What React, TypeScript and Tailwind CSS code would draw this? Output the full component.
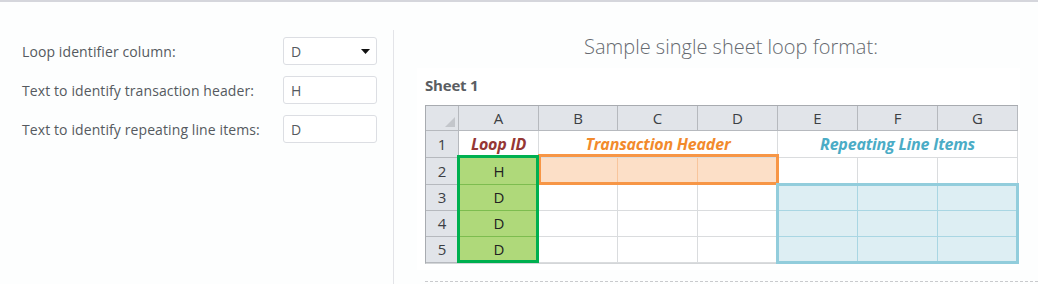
import React from 'react';

const ui = { fontFamily: '"Open Sans", "Noto Sans", sans-serif' };
const xl = { fontFamily: '"Open Sans", Lato, sans-serif' };

const cols = ['A', 'B', 'C', 'D', 'E', 'F', 'G'];

const FormRow = ({ label, value, select }: { label: string; value: string; select?: boolean }) => (
  <div className="flex items-center h-[28px]">
    <div className="w-[261px] text-[14px] tracking-[0.1px] text-[#555a60] whitespace-nowrap">{label}</div>
    <div className="w-[94px] h-[28px] flex items-center justify-between rounded-[3px] border border-[#dcdee3] bg-white pl-[7px] pr-[6px] text-[14px] text-[#555a60]">
      <span>{value}</span>
      {select && (
        <svg width="9" height="5" viewBox="0 0 9 5">
          <path d="M0 0h9L4.5 5z" fill="#111" />
        </svg>
      )}
    </div>
  </div>
);

// data rows 2..5 -> column A content
const rows = [
  { n: 2, a: 'H' },
  { n: 3, a: 'D' },
  { n: 4, a: 'D' },
  { n: 5, a: 'D' },
];

const Sheet = () => (
  <div className="relative w-[593px]" style={xl}>
    <div className="grid grid-cols-[33px_80px_79px_80px_80px_80px_80px_80px] grid-rows-[25px_27px_27px_26px_26px_26px] border-t border-l border-[#a8abb0] border-b border-b-[#d4d6d8]">
      {/* header row */}
      <div className="relative bg-[#e1e4e9] border-r border-b border-[#b6b9be]">
        <svg className="absolute right-[3px] bottom-[3px]" width="10" height="10" viewBox="0 0 10 10">
          <path d="M10 0v10H0z" fill="#c3c6cb" />
        </svg>
      </div>
      {cols.map((c) => (
        <div
          key={c}
          className="flex items-center justify-center bg-[#e1e4e9] border-r border-b border-[#b6b9be] text-[15px] text-[#3c3f44]"
        >
          {c}
        </div>
      ))}

      {/* row 1 */}
      <div className="flex items-center justify-center bg-[#e1e4e9] border-r border-b border-[#b6b9be] text-[15px] text-[#3c3f44]">1</div>
      <div className="flex items-center justify-center bg-white border-r border-b border-[#dadcde] text-[16px] font-bold italic tracking-[-0.2px] text-[#953735]">
        Loop ID
      </div>
      <div className="col-span-3 flex items-center justify-center bg-white border-r border-b border-[#dadcde] text-[16px] font-bold italic tracking-[-0.2px] text-[#f28a2c]">
        Transaction Header
      </div>
      <div className="col-span-3 flex items-center justify-center bg-white border-r border-b border-[#dadcde] text-[16px] font-bold italic tracking-[-0.2px] text-[#4bacc6]">
        Repeating Line Items
      </div>

      {rows.map((r) => (
        <React.Fragment key={r.n}>
          <div className="flex items-center justify-center bg-[#e1e4e9] border-r border-b border-[#b6b9be] text-[15px] text-[#3c3f44]">
            {r.n}
          </div>
          <div className="flex items-center justify-center bg-[#afd97a] border-b border-[#7dbd4f] text-[15px] font-medium text-[#222]">
            {r.a}
          </div>
          {['B', 'C', 'D'].map((c) => (
            <div
              key={c}
              className={
                r.n === 2
                  ? 'bg-[#fcdfc7] border-r border-[#f8c59c]'
                  : 'bg-white border-r border-b border-[#dadcde]'
              }
            />
          ))}
          {['E', 'F', 'G'].map((c) => (
            <div
              key={c}
              className={
                r.n === 2
                  ? 'bg-white border-r border-b border-[#dadcde]'
                  : 'bg-[#ddeef3] border-r border-b border-[#a9d6e3]'
              }
            />
          ))}
        </React.Fragment>
      ))}
    </div>

    {/* highlight frames */}
    <div className="absolute left-[113px] top-[49px] w-[241px] h-[31px] border-[3px] border-[#f79646]" />
    <div className="absolute left-[32px] top-[50px] w-[82px] h-[108px] border-[3px] border-[#00b050]" />
    <div className="absolute left-[351px] top-[78px] w-[243px] h-[81px] border-[3px] border-[#92cddc]" />
  </div>
);

export default function App() {
  return (
    <div className="w-[1038px] h-[284px] flex border-t-2 border-[#d5d6dc] bg-[#fdfefe] overflow-hidden" style={ui}>
      {/* settings */}
      <div className="w-[393px] pt-[35px] pl-[22px] flex flex-col gap-[11px]">
        <FormRow label="Loop identifier column:" value="D" select />
        <FormRow label="Text to identify transaction header:" value="H" />
        <FormRow label="Text to identify repeating line items:" value="D" />
      </div>
      <div className="w-px mt-[28px] bg-[#e3e4e8]" />

      {/* sample */}
      <div className="flex-1 flex flex-col">
        <div className="pt-[32px] pl-[30px] text-center text-[20px] leading-[26px] font-light text-[#666a70]">
          Sample single sheet loop format:
        </div>
        <div className="ml-[23px] mt-[8px] w-[603px] bg-white pl-[8px] pt-[7px] pb-[6px]">
          <div className="text-[15px] leading-[20px] font-bold tracking-[-0.2px] text-[#5a5d62] mb-[10px]" style={xl}>
            Sheet 1
          </div>
          <Sheet />
        </div>
        <div className="ml-[31px] mt-auto mb-[2px] border-t border-dashed border-[#c9cacd]" />
      </div>
    </div>
  );
}
